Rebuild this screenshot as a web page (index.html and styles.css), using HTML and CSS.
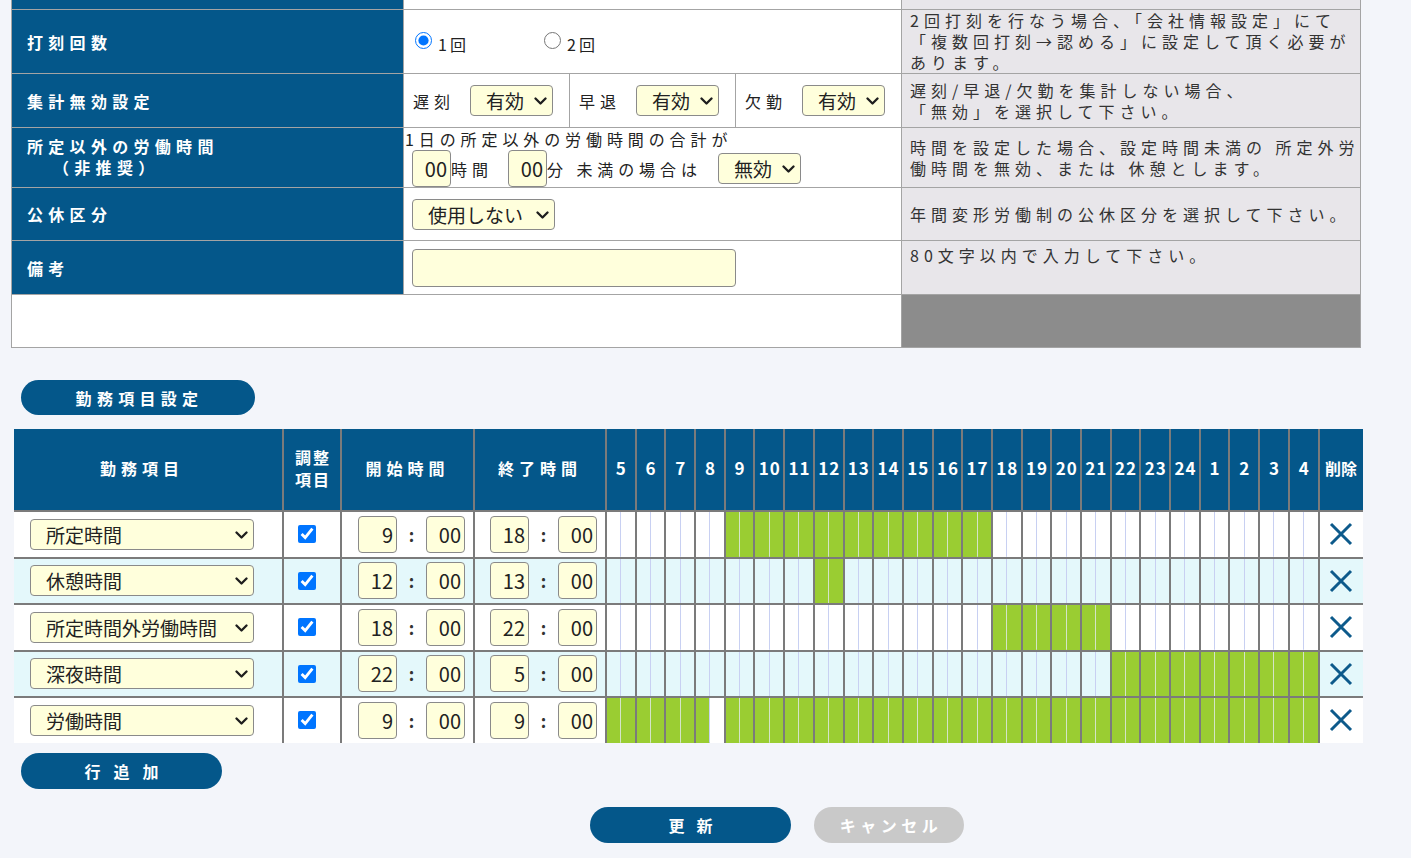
FILE: index.html
```html
<!DOCTYPE html>
<html lang="ja">
<head>
<meta charset="utf-8">
<title>勤務設定</title>
<link rel="stylesheet" href="styles.css">
</head>
<body>
<div class="page">
  <div class="settings">
    <div class="lbl"></div><div class="val"></div><div class="help"></div>

    <div class="lbl">打刻回数</div>
    <div class="val radios">
      <label class="radio"><input type="radio" name="stamp" checked><span>1回</span></label>
      <label class="radio"><input type="radio" name="stamp"><span>2回</span></label>
    </div>
    <div class="help">2回打刻を行なう場合、「会社情報設定」にて<br>「複数回打刻→認める」に設定して頂く必要が<br>あります。</div>

    <div class="lbl">集計無効設定</div>
    <div class="val triple">
      <div class="sub"><span class="txt">遅刻</span><span class="selw"><select class="sel sel-s"><option>有効</option></select><svg class="chev" viewBox="0 0 13 8" width="13" height="8"><path d="M1.5 1.5 L6.5 6.5 L11.5 1.5"/></svg></span></div>
      <div class="sub"><span class="txt">早退</span><span class="selw"><select class="sel sel-s"><option>有効</option></select><svg class="chev" viewBox="0 0 13 8" width="13" height="8"><path d="M1.5 1.5 L6.5 6.5 L11.5 1.5"/></svg></span></div>
      <div class="sub"><span class="txt">欠勤</span><span class="selw"><select class="sel sel-s"><option>有効</option></select><svg class="chev" viewBox="0 0 13 8" width="13" height="8"><path d="M1.5 1.5 L6.5 6.5 L11.5 1.5"/></svg></span></div>
    </div>
    <div class="help">遅刻/早退/欠勤を集計しない場合、<br>「無効」を選択して下さい。</div>

    <div class="lbl lbl2">所定以外の労働時間<span class="indent">（非推奨）</span></div>
    <div class="val stack">
      <div class="txt line1">1日の所定以外の労働時間の合計が</div>
      <div class="line2">
        <input class="num" value="00"><span class="txt unit">時間</span>
        <input class="num" value="00"><span class="txt unit2">分 未満の場合は</span>
        <span class="selw"><select class="sel sel-s"><option>無効</option></select><svg class="chev" viewBox="0 0 13 8" width="13" height="8"><path d="M1.5 1.5 L6.5 6.5 L11.5 1.5"/></svg></span>
      </div>
    </div>
    <div class="help">時間を設定した場合、設定時間未満の 所定外労<br>働時間を無効、または 休憩とします。</div>

    <div class="lbl">公休区分</div>
    <div class="val"><span class="selw"><select class="sel sel-m"><option>使用しない</option></select><svg class="chev" viewBox="0 0 13 8" width="13" height="8"><path d="M1.5 1.5 L6.5 6.5 L11.5 1.5"/></svg></span></div>
    <div class="help">年間変形労働制の公休区分を選択して下さい。</div>

    <div class="lbl">備考</div>
    <div class="val"><input class="memo" value=""></div>
    <div class="help help-top">80文字以内で入力して下さい。</div>

    <div class="blank"></div>
    <div class="blank-help"></div>
  </div>

  <button class="pill section-btn">勤務項目設定</button>

  <div class="sched">
    <div class="th">勤務項目</div>
    <div class="th th-adj">調整<br>項目</div>
    <div class="th">開始時間</div>
    <div class="th">終了時間</div>
    <div class="th hh">5</div><div class="th hh">6</div><div class="th hh">7</div><div class="th hh">8</div>
    <div class="th hh">9</div><div class="th hh">10</div><div class="th hh">11</div><div class="th hh">12</div>
    <div class="th hh">13</div><div class="th hh">14</div><div class="th hh">15</div><div class="th hh">16</div>
    <div class="th hh">17</div><div class="th hh">18</div><div class="th hh">19</div><div class="th hh">20</div>
    <div class="th hh">21</div><div class="th hh">22</div><div class="th hh">23</div><div class="th hh">24</div>
    <div class="th hh">1</div><div class="th hh">2</div><div class="th hh">3</div><div class="th hh">4</div>
    <div class="th th-del">削除</div>

    <div class="row">
      <div class="item"><span class="selw"><select class="sel sel-item"><option>所定時間</option></select><svg class="chev" viewBox="0 0 13 8" width="13" height="8"><path d="M1.5 1.5 L6.5 6.5 L11.5 1.5"/></svg></span></div>
      <div class="adj"><input type="checkbox" checked></div>
      <div class="time"><input class="num" value="9"><span class="colon">:</span><input class="num" value="00"></div>
      <div class="time"><input class="num" value="18"><span class="colon">:</span><input class="num" value="00"></div>
      <div class="hr"></div><div class="hr"></div><div class="hr"></div><div class="hr"></div>
      <div class="hr g"></div><div class="hr g"></div><div class="hr g"></div><div class="hr g"></div>
      <div class="hr g"></div><div class="hr g"></div><div class="hr g"></div><div class="hr g"></div>
      <div class="hr g"></div><div class="hr"></div><div class="hr"></div><div class="hr"></div>
      <div class="hr"></div><div class="hr"></div><div class="hr"></div><div class="hr"></div>
      <div class="hr"></div><div class="hr"></div><div class="hr"></div><div class="hr"></div>
      <div class="del"><svg viewBox="0 0 24 24" width="24" height="24"><path d="M2 2 L22 22 M22 2 L2 22"/></svg></div>
    </div>

    <div class="row alt">
      <div class="item"><span class="selw"><select class="sel sel-item"><option>休憩時間</option></select><svg class="chev" viewBox="0 0 13 8" width="13" height="8"><path d="M1.5 1.5 L6.5 6.5 L11.5 1.5"/></svg></span></div>
      <div class="adj"><input type="checkbox" checked></div>
      <div class="time"><input class="num" value="12"><span class="colon">:</span><input class="num" value="00"></div>
      <div class="time"><input class="num" value="13"><span class="colon">:</span><input class="num" value="00"></div>
      <div class="hr"></div><div class="hr"></div><div class="hr"></div><div class="hr"></div>
      <div class="hr"></div><div class="hr"></div><div class="hr"></div><div class="hr g"></div>
      <div class="hr"></div><div class="hr"></div><div class="hr"></div><div class="hr"></div>
      <div class="hr"></div><div class="hr"></div><div class="hr"></div><div class="hr"></div>
      <div class="hr"></div><div class="hr"></div><div class="hr"></div><div class="hr"></div>
      <div class="hr"></div><div class="hr"></div><div class="hr"></div><div class="hr"></div>
      <div class="del"><svg viewBox="0 0 24 24" width="24" height="24"><path d="M2 2 L22 22 M22 2 L2 22"/></svg></div>
    </div>

    <div class="row">
      <div class="item"><span class="selw"><select class="sel sel-item"><option>所定時間外労働時間</option></select><svg class="chev" viewBox="0 0 13 8" width="13" height="8"><path d="M1.5 1.5 L6.5 6.5 L11.5 1.5"/></svg></span></div>
      <div class="adj"><input type="checkbox" checked></div>
      <div class="time"><input class="num" value="18"><span class="colon">:</span><input class="num" value="00"></div>
      <div class="time"><input class="num" value="22"><span class="colon">:</span><input class="num" value="00"></div>
      <div class="hr"></div><div class="hr"></div><div class="hr"></div><div class="hr"></div>
      <div class="hr"></div><div class="hr"></div><div class="hr"></div><div class="hr"></div>
      <div class="hr"></div><div class="hr"></div><div class="hr"></div><div class="hr"></div>
      <div class="hr"></div><div class="hr g"></div><div class="hr g"></div><div class="hr g"></div>
      <div class="hr g"></div><div class="hr"></div><div class="hr"></div><div class="hr"></div>
      <div class="hr"></div><div class="hr"></div><div class="hr"></div><div class="hr"></div>
      <div class="del"><svg viewBox="0 0 24 24" width="24" height="24"><path d="M2 2 L22 22 M22 2 L2 22"/></svg></div>
    </div>

    <div class="row alt">
      <div class="item"><span class="selw"><select class="sel sel-item"><option>深夜時間</option></select><svg class="chev" viewBox="0 0 13 8" width="13" height="8"><path d="M1.5 1.5 L6.5 6.5 L11.5 1.5"/></svg></span></div>
      <div class="adj"><input type="checkbox" checked></div>
      <div class="time"><input class="num" value="22"><span class="colon">:</span><input class="num" value="00"></div>
      <div class="time"><input class="num" value="5"><span class="colon">:</span><input class="num" value="00"></div>
      <div class="hr"></div><div class="hr"></div><div class="hr"></div><div class="hr"></div>
      <div class="hr"></div><div class="hr"></div><div class="hr"></div><div class="hr"></div>
      <div class="hr"></div><div class="hr"></div><div class="hr"></div><div class="hr"></div>
      <div class="hr"></div><div class="hr"></div><div class="hr"></div><div class="hr"></div>
      <div class="hr"></div><div class="hr g"></div><div class="hr g"></div><div class="hr g"></div>
      <div class="hr g"></div><div class="hr g"></div><div class="hr g"></div><div class="hr g"></div>
      <div class="del"><svg viewBox="0 0 24 24" width="24" height="24"><path d="M2 2 L22 22 M22 2 L2 22"/></svg></div>
    </div>

    <div class="row">
      <div class="item"><span class="selw"><select class="sel sel-item"><option>労働時間</option></select><svg class="chev" viewBox="0 0 13 8" width="13" height="8"><path d="M1.5 1.5 L6.5 6.5 L11.5 1.5"/></svg></span></div>
      <div class="adj"><input type="checkbox" checked></div>
      <div class="time"><input class="num" value="9"><span class="colon">:</span><input class="num" value="00"></div>
      <div class="time"><input class="num" value="9"><span class="colon">:</span><input class="num" value="00"></div>
      <div class="hr g"></div><div class="hr g"></div><div class="hr g"></div><div class="hr gh"></div>
      <div class="hr g"></div><div class="hr g"></div><div class="hr g"></div><div class="hr g"></div>
      <div class="hr g"></div><div class="hr g"></div><div class="hr g"></div><div class="hr g"></div>
      <div class="hr g"></div><div class="hr g"></div><div class="hr g"></div><div class="hr g"></div>
      <div class="hr g"></div><div class="hr g"></div><div class="hr g"></div><div class="hr g"></div>
      <div class="hr g"></div><div class="hr g"></div><div class="hr g"></div><div class="hr g"></div>
      <div class="del"><svg viewBox="0 0 24 24" width="24" height="24"><path d="M2 2 L22 22 M22 2 L2 22"/></svg></div>
    </div>
  </div>

  <button class="pill add-btn">行追加</button>

  <div class="actions">
    <button class="pill update-btn">更新</button>
    <button class="pill cancel-btn">キャンセル</button>
  </div>
</div>
</body>
</html>
```

FILE: styles.css
```css
* { box-sizing: border-box; }

body {
  margin: 0;
  background: #f3f5fa;
  font-family: "Noto Sans CJK JP", "Noto Sans", sans-serif;
  color: #222;
}

.page {
  width: 1411px;
  height: 858px;
  overflow: hidden;
  padding-left: 11px;
}

/* ---------- settings table ---------- */
.settings {
  display: grid;
  width: 1350px;
  grid-template-columns: 391px 497px 458px;
  grid-template-rows: 9px 63px 53px 59px 52px 53px 52px;
  gap: 1px;
  background: #a4a4a4;
  border: 1px solid #a4a4a4;
  border-top: 0;
}

.lbl {
  background: #04578a;
  color: #fff;
  font-weight: 700;
  font-size: 16px;
  letter-spacing: 5.3px;
  padding-left: 15px;
  display: flex;
  align-items: center;
}

.lbl2 {
  flex-direction: column;
  align-items: flex-start;
  justify-content: center;
  line-height: 21px;
  padding-bottom: 2px;
}

.indent { padding-left: 26px; }

.val {
  background: #fff;
  display: flex;
  align-items: center;
  padding-left: 8px;
}

.help {
  background: #e8e6ea;
  color: #333;
  font-size: 16px;
  letter-spacing: 5px;
  line-height: 21px;
  padding-left: 8px;
  white-space: nowrap;
  display: flex;
  align-items: center;
}

.help-top { align-items: flex-start; padding-top: 4px; }

.blank { grid-column: 1 / 3; background: #fff; }
.blank-help { background: #8c8c8c; }

.txt {
  font-size: 16px;
  letter-spacing: 4.9px;
  color: #222;
}

.radios { padding-left: 11px; }

.radio {
  width: 129px;
  display: flex;
  align-items: center;
  font-size: 16px;
  letter-spacing: 3px;
  padding-top: 4px;
}

.radio input {
  width: 17px;
  height: 17px;
  margin: -6px 6px 0 0;
}

.triple {
  padding: 0;
  display: grid;
  grid-template-columns: 165px 165px 165px;
  align-items: stretch;
  gap: 1px;
  background: #a4a4a4;
}

.sub {
  background: #fff;
  display: flex;
  align-items: center;
  padding-left: 9px;
}

.sub .txt { width: 57px; padding-top: 1px; }

.selw {
  position: relative;
  display: inline-flex;
}

.chev {
  position: absolute;
  right: 6px;
  top: 12px;
  pointer-events: none;
}

.chev path {
  fill: none;
  stroke: #1e1e1e;
  stroke-width: 2.3;
  stroke-linecap: round;
  stroke-linejoin: round;
}

.sel {
  -webkit-appearance: none;
  appearance: none;
  font-family: "Noto Sans CJK JP", "Noto Sans", sans-serif;
  font-size: 19px;
  color: #222;
  background-color: #ffffdc;
  border: 1px solid #8a8a8a;
  border-radius: 4px;
  height: 31px;
  padding: 0 20px 0 15px;
  line-height: 29px;
  margin: 0;
}

.sel-s { width: 83px; }
.sel-m { width: 143px; }
.sel-item { width: 224px; }

.stack {
  flex-direction: column;
  align-items: flex-start;
  justify-content: flex-start;
  padding-left: 1px;
}

.line1 { line-height: 20px; padding-top: 1px; }

.line2 {
  display: flex;
  align-items: center;
  padding-left: 7px;
  margin-top: 1px;
}

.unit { width: 57px; }
.unit2 { width: 171px; }

.num {
  font-family: "Noto Sans CJK JP", "Noto Sans", sans-serif;
  font-size: 20px;
  color: #222;
  width: 39px;
  height: 37px;
  border: 1px solid #8a8a8a;
  border-radius: 4px;
  background: #ffffdc;
  text-align: right;
  padding: 0 3px 0 0;
}

.memo {
  width: 324px;
  height: 38px;
  border: 1px solid #8a8a8a;
  border-radius: 4px;
  background: #ffffdc;
}

/* ---------- buttons ---------- */
.pill {
  font-family: "Noto Sans CJK JP", "Noto Sans", sans-serif;
  border: 0;
  border-radius: 18px;
  background: #04578a;
  color: #fff;
  font-weight: 700;
  font-size: 16px;
  display: flex;
  align-items: center;
  justify-content: center;
  padding: 0;
}

.section-btn {
  width: 234px;
  height: 35px;
  margin: 32px 0 14px 10px;
  letter-spacing: 5.3px;
  padding-left: 3px;
}

.add-btn {
  width: 201px;
  height: 36px;
  margin: 10px 0 0 10px;
  letter-spacing: 13px;
  padding-left: 13px;
}

.actions {
  display: flex;
  gap: 23px;
  margin-top: 18px;
  padding-left: 579px;
}

.update-btn {
  width: 201px;
  height: 36px;
  letter-spacing: 12px;
  padding-left: 12px;
}

.cancel-btn {
  width: 150px;
  height: 36px;
  background: #c9c9c9;
  letter-spacing: 4.5px;
  padding-left: 4px;
}

/* ---------- schedule grid ---------- */
.sched {
  display: grid;
  width: 1349px;
  margin-left: 3px;
  grid-template-columns: 268px 56px 131px 130px repeat(24, 27.7px) 43px;
  grid-template-rows: 81px repeat(5, 44.5px);
  gap: 2px;
  background: #7b7b7b;
}

.th {
  background: #04578a;
  color: #fff;
  font-weight: 700;
  font-size: 16px;
  letter-spacing: 5px;
  display: flex;
  align-items: center;
  justify-content: center;
  text-align: center;
  line-height: 22px;
  padding-bottom: 4px;
}

.th:first-child { padding-right: 12px; }
.th-adj { letter-spacing: 2px; padding-left: 2px; }
.th-del { letter-spacing: 0; }

.hh {
  font-size: 17px;
  letter-spacing: 1px;
  padding-left: 1px;
}

.row { display: contents; }
.row > div { background-color: #fff; }
.row.alt > div { background-color: #e4f8fb; }

.item {
  display: flex;
  align-items: center;
  padding-left: 16px;
}

.adj {
  display: flex;
  align-items: center;
  justify-content: center;
}

.adj input {
  width: 18px;
  height: 18px;
  margin: 0 10px 0 0;
}

.time {
  display: flex;
  align-items: center;
  padding-left: 16px;
}

.time + .time { padding-left: 15px; }

.colon {
  width: 29px;
  text-align: center;
  font-size: 17px;
  font-weight: 700;
  color: #333;
}

.hr {
  background-image: linear-gradient(#c8d0f2, #c8d0f2);
  background-size: 1px 100%;
  background-position: center;
  background-repeat: no-repeat;
}

.row > .hr.g {
  background-color: #9acd32;
  background-image: linear-gradient(#d4e4c8, #d4e4c8);
}

.row > .hr.gh {
  background-image: linear-gradient(#c8d0f2, #c8d0f2), linear-gradient(to right, #9acd32 50%, transparent 50%);
  background-size: 1px 100%, 100% 100%;
  background-position: center, 0 0;
}

.del {
  display: flex;
  align-items: center;
  justify-content: center;
}

.del svg path {
  stroke: #0d5a8b;
  stroke-width: 3;
  fill: none;
}
```
